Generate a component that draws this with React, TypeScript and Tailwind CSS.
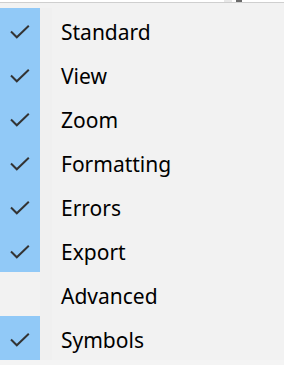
const ITEMS: { label: string; checked: boolean }[] = [
  { label: "Standard", checked: true },
  { label: "View", checked: true },
  { label: "Zoom", checked: true },
  { label: "Formatting", checked: true },
  { label: "Errors", checked: true },
  { label: "Export", checked: true },
  { label: "Advanced", checked: false },
  { label: "Symbols", checked: true },
];

function CheckMark() {
  return (
    <svg width="20" height="14" viewBox="0 0 20 14" fill="none" className="text-[#333333]">
      <path d="M1 6.5 L6.8 12.3 L18.8 0.8" stroke="currentColor" strokeWidth="2" />
    </svg>
  );
}

export default function App() {
  return (
    <div className="flex h-[365px] w-[284px] flex-col overflow-hidden bg-[#f2f2f2] font-['Noto_Sans',sans-serif]">
      {/* toolbar edge peeking above the menu */}
      <div className="relative h-[3px] shrink-0 border-b border-[#cfcfcf] bg-white">
        <div className="absolute left-[224px] top-0 h-[2px] w-[8px] bg-[#e8e8e8]" />
        <div className="absolute left-[236px] top-0 h-[2px] w-[6px] bg-[#6b6b6b]" />
      </div>
      <div className="h-[5px] shrink-0" />
      <ul className="flex flex-col">
        {ITEMS.map((item) => (
          <li key={item.label} className="flex h-[44px] items-center">
            <div
              className={
                item.checked
                  ? "flex h-full w-10 items-center justify-center bg-[#91c9f7] pt-[4px]"
                  : "h-full w-10"
              }
            >
              {item.checked && <CheckMark />}
            </div>
            <div className="h-full w-3 bg-[#f0f0f0]" />
            <span className="pl-[9px] pt-[5px] text-[21px] leading-none text-black">
              {item.label}
            </span>
          </li>
        ))}
      </ul>
      <div className="flex-1 bg-[#f4f4f4]" />
    </div>
  );
}
